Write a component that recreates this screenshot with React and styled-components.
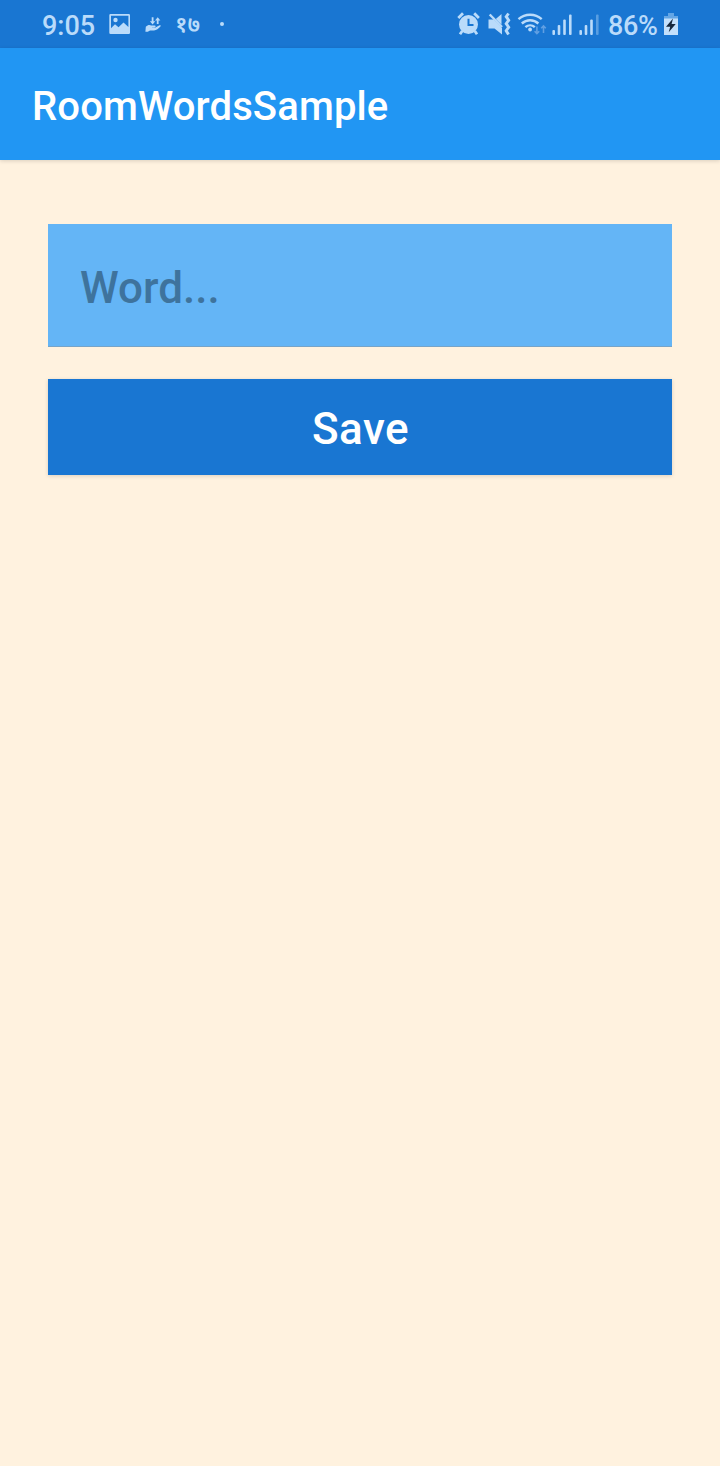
import React from "react";
import styled, { createGlobalStyle } from "styled-components";

const GlobalStyle = createGlobalStyle`
  * { box-sizing: border-box; }
  body { margin: 0; background: #fff2df; font-family: Roboto, "Liberation Sans", sans-serif; }
`;

const Screen = styled.div`
  min-height: 1466px;
  background: #fff2df;
`;

const StatusBar = styled.div`
  height: 48px;
  padding: 0 42px;
  display: flex;
  align-items: center;
  justify-content: space-between;
  background: #1976d2;
  color: #badbfa;
`;

const StatusGroup = styled.div`
  height: 48px;
  display: flex;
  align-items: center;
`;

const StatusText = styled.span`
  width: ${(p) => p.$width}px;
  margin-left: ${(p) => p.$gap || 0}px;
  padding-top: 3px;
  font-size: 27px;
  font-weight: 500;
  line-height: 32px;
  letter-spacing: ${(p) => p.$tracking || 0}px;
  white-space: nowrap;
`;

const DateText = styled.span`
  width: 26px;
  margin-left: 13px;
  padding-bottom: 2px;
  font-family: "Noto Sans", "Noto Sans Devanagari", sans-serif;
  font-size: 23px;
  font-weight: 600;
  line-height: 28px;
  white-space: nowrap;
`;

const Dot = styled.span`
  width: 4px;
  height: 4px;
  margin-left: 19px;
  border-radius: 50%;
  background: #badbfa;
`;

const Icon = styled.svg`
  display: block;
  flex: none;
  margin-left: ${(p) => p.$gap || 0}px;
`;

const AppBar = styled.header`
  height: 112px;
  padding: 6px 32px 0;
  display: flex;
  align-items: center;
  background: #2196f3;
  box-shadow: 0 1px 4px rgba(0, 0, 0, 0.15);
`;

const Title = styled.h1`
  margin: 0;
  color: #fff;
  font-size: 40px;
  font-weight: 500;
  line-height: 48px;
  letter-spacing: 0.14px;
`;

const Form = styled.main`
  padding: 64px 48px 0;
  display: flex;
  flex-direction: column;
  gap: 32px;
`;

const WordInput = styled.input`
  width: 100%;
  height: 123px;
  padding: 6px 32px 0;
  border: 0;
  border-bottom: 1px solid #77a4c8;
  border-radius: 0;
  outline: 0;
  background: #64b5f6;
  color: #222;
  font: 500 44px Roboto, "Liberation Sans", sans-serif;
  &::placeholder { color: #3e739d; opacity: 1; }
`;

const SaveButton = styled.button`
  height: 96px;
  padding: 4px 0 0 1px;
  border: 0;
  background: #1976d2;
  color: #fff;
  font: 500 44px Roboto, "Liberation Sans", sans-serif;
  letter-spacing: 0.5px;
  box-shadow: 0 1px 4px rgba(0, 0, 0, 0.15);
`;

const PictureIcon = () => (
  <Icon $gap={14} width="22" height="22" viewBox="0 0 22 22">
    <path fill="currentColor" fillRule="evenodd" d="M1.500 1h18.300q1.200 0 1.200 1.200v17.600q0 1.200-1.200 1.200H1.500Q.3 21 .3 19.800V2.200Q.3 1 1.500 1zM2 2.700v12.600L6 11.300l3.500 3 5-4.800 4.900 4.500V2.700z" />
    <circle cx="6.500" cy="7" r="2.200" fill="currentColor" />
  </Icon>
);

const HandIcon = () => (
  <Icon $gap={14} width="17" height="20" viewBox="0 0 17 20">
    <path fill="currentColor" d="M6.700 3.300h1.800v4h1.800l-2.700 3.200-2.700-3.200h1.800zM11.800 10V6.500H10l2.700-3.200 2.700 3.200h-1.800V10z" />
    <path fill="currentColor" d="M.8 12.800c2-1.900 3.700-2.200 5.400-1.200h3.500c1.400.2 1.200 1.600-.2 1.800H7v.4h3l4.100-2.400c1.500-.5 2.100.4 1.300 1.200-2 2.300-3.700 3.800-6.400 3.800H5L2.800 17.800H.4z" />
  </Icon>
);

const AlarmIcon = () => (
  <Icon width="24" height="26" viewBox="0 0 24 26">
    <circle cx="11.500" cy="13.500" r="9.500" fill="currentColor" />
    <path d="M1.300 7 6 2.300M21.900 7l-4.700-4.700M5.200 20l-2.200 3.200M17.800 20l2.200 3.200" stroke="currentColor" strokeWidth="2.800" fill="none" />
    <path d="M11.500 7.800v6.100h5" stroke="#1976d2" strokeWidth="2" fill="none" />
  </Icon>
);

const MuteIcon = () => (
  <Icon $gap={7} width="24" height="24" viewBox="0 0 24 24">
    <path fill="currentColor" d="M.5 7.500h5L14 16v6.500L6.500 16.500h-6zM7.800 7 13.500 2v10.800z" />
    <path d="m1.700 2.500 12.300 12.500" stroke="currentColor" strokeWidth="2.400" />
    <path d="m20.500 1.500-2.300 3.200 2.500 3.500-2.500 3.500 2.500 3.500-2.500 3.500 2.300 3.800" stroke="currentColor" strokeWidth="2.900" fill="none" />
  </Icon>
);

const WifiIcon = () => (
  <Icon $gap={5} width="31" height="24" viewBox="0 0 31 24">
    <path d="M1.500 7.200c6.600-6 16.600-6 23.200 0M4.800 11.500c4.800-4.300 11.800-4.300 16.600 0M8.400 15.200c2.700-2.500 6.700-2.500 9.400 0" stroke="currentColor" strokeWidth="2.400" fill="none" />
    <circle cx="13.100" cy="17.500" r="1.900" fill="currentColor" />
    <path d="M19.900 14.500v7m-2.300-2.300 2.300 2.400 2.300-2.400M26.500 21v-7m-2.300 2.300 2.300-2.400 2.300 2.400" stroke="#609fe2" strokeWidth="1.600" fill="none" />
  </Icon>
);

const SignalIcon = ({ gap, weak }) => (
  <Icon $gap={gap} width="21" height="24" viewBox="0 0 21 24">
    <g fill="currentColor">
      <rect x=".4" y="18" width="2.600" height="5" rx="1" />
      <rect x="5.700" y="13" width="2.600" height="10" rx="1" />
      <rect x="11.200" y="7.500" width="2.600" height="15.500" rx="1" />
      <rect x="17" y="2.500" width="2.600" height="20.500" rx="1" opacity={weak ? 0.4 : 1} />
    </g>
  </Icon>
);

const BatteryIcon = () => (
  <Icon $gap={6} width="14" height="24" viewBox="0 0 14 24">
    <path fill="#64a6e5" d="M4 1h6v3h4v3H0V4h4z" />
    <path fill="#c3e0fb" d="M0 6.500h14v16.500H0z" />
    <path fill="#17283d" d="m9 6.500-7 8.300h4.200l-1.500 5.500 7-8.300H7.600z" />
  </Icon>
);

export default function App() {
  return (
    <Screen>
      <GlobalStyle />
      <StatusBar>
        <StatusGroup>
          <StatusText $width={53}>9:05</StatusText>
          <PictureIcon />
          <HandIcon />
          <DateText>१७</DateText>
          <Dot />
        </StatusGroup>
        <StatusGroup>
          <AlarmIcon />
          <MuteIcon />
          <WifiIcon />
          <SignalIcon gap={4} />
          <SignalIcon gap={6} weak />
          <StatusText $width={50} $gap={8} $tracking={-0.4}>86%</StatusText>
          <BatteryIcon />
        </StatusGroup>
      </StatusBar>
      <AppBar>
        <Title>RoomWordsSample</Title>
      </AppBar>
      <Form>
        <WordInput placeholder="Word..." aria-label="Word" />
        <SaveButton type="button">Save</SaveButton>
      </Form>
    </Screen>
  );
}
